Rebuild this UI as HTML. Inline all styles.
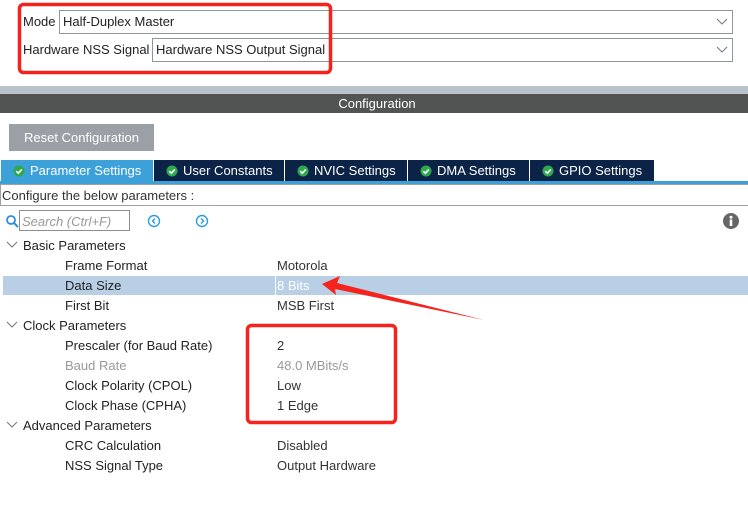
<!DOCTYPE html>
<html><head><meta charset="utf-8"><style>
*{margin:0;padding:0;box-sizing:border-box}
body{width:748px;height:513px;background:#fff;position:relative;overflow:hidden;font-family:"Liberation Sans",Arial,sans-serif;font-size:13px;color:#222}
.a{position:absolute;white-space:nowrap}
.sel{position:absolute;border:1px solid #8e969c;height:24px;background:#fff;padding:3px 0 0 3px}
.chev{position:absolute;right:4px;top:5px}
.tab{position:absolute;top:160px;height:21px;background:#0b2347;color:#fff;padding:3px 0 0 0;font-size:13px}
.tab svg{vertical-align:-2px;margin:0 5px 0 12px}
.row{position:absolute;left:0;width:748px;height:20px}
.lbl{position:absolute;left:65px;top:3px}
.val{position:absolute;left:277px;top:3px;color:#333}
.grp{position:absolute;left:23px;top:3px}
.gc{position:absolute;left:6px;top:6px}
</style></head><body>
<div class="a" style="left:23px;top:14px">Mode</div>
<div class="sel" style="left:59px;top:10px;width:674px">Half-Duplex Master<svg class="chev" width="12" height="10"><path d="M1 3l5 5 5-5" fill="none" stroke="#777" stroke-width="1"/></svg></div>
<div class="a" style="left:23px;top:42px">Hardware NSS Signal</div>
<div class="sel" style="left:152px;top:38px;width:581px">Hardware NSS Output Signal<svg class="chev" width="12" height="10"><path d="M1 3l5 5 5-5" fill="none" stroke="#777" stroke-width="1"/></svg></div>

<div class="a" style="left:0;top:86px;width:748px;height:8px;background:#bac3c9"></div>
<div class="a" style="left:0;top:94px;width:748px;height:19px;background:#525453;color:#fff;text-align:center;padding-top:2px;padding-left:6px">Configuration</div>

<div class="a" style="left:9px;top:124px;width:145px;height:27px;background:#9aa0a5;color:#fff;text-align:center;padding-top:6px">Reset Configuration</div>

<div class="tab" style="left:1px;width:152px;background:#3ca1d9"><svg width="12" height="12"><circle cx="6" cy="6" r="5.5" fill="#2fa84f"/><path d="M3.3 6.2l2 2 3.5-3.8" fill="none" stroke="#fff" stroke-width="1.6"/></svg>Parameter Settings</div>
<div class="tab" style="left:154px;width:130px"><svg width="12" height="12"><circle cx="6" cy="6" r="5.5" fill="#2fa84f"/><path d="M3.3 6.2l2 2 3.5-3.8" fill="none" stroke="#fff" stroke-width="1.6"/></svg>User Constants</div>
<div class="tab" style="left:285px;width:122px"><svg width="12" height="12"><circle cx="6" cy="6" r="5.5" fill="#2fa84f"/><path d="M3.3 6.2l2 2 3.5-3.8" fill="none" stroke="#fff" stroke-width="1.6"/></svg>NVIC Settings</div>
<div class="tab" style="left:408px;width:121px"><svg width="12" height="12"><circle cx="6" cy="6" r="5.5" fill="#2fa84f"/><path d="M3.3 6.2l2 2 3.5-3.8" fill="none" stroke="#fff" stroke-width="1.6"/></svg>DMA Settings</div>
<div class="tab" style="left:530px;width:124px"><svg width="12" height="12"><circle cx="6" cy="6" r="5.5" fill="#2fa84f"/><path d="M3.3 6.2l2 2 3.5-3.8" fill="none" stroke="#fff" stroke-width="1.6"/></svg>GPIO Settings</div>
<div class="a" style="left:0;top:181px;width:748px;height:3px;background:#3ca1d9"></div>
<div class="a" style="left:0;top:184px;width:748px;height:22px;border:1px solid #a0a0a0;border-right:none;padding:3px 0 0 1px;color:#333">Configure the below parameters :</div>

<svg class="a" style="left:5px;top:214px" width="14" height="14"><circle cx="6" cy="6" r="4" fill="none" stroke="#2b8fd6" stroke-width="1.8"/><path d="M9 9l4 4" stroke="#2b8fd6" stroke-width="2"/></svg>
<div class="a" style="left:19px;top:210px;width:111px;height:21px;border:1px solid #8e8e8e;color:#999;font-style:italic;padding:3px 0 0 2px">Search (Ctrl+F)</div>
<svg class="a" style="left:147px;top:214px" width="14" height="14"><circle cx="7" cy="7" r="5.5" fill="none" stroke="#2b9be0" stroke-width="1.4"/><path d="M8 4.5L5.5 7 8 9.5" fill="none" stroke="#2b9be0" stroke-width="1.4"/></svg>
<svg class="a" style="left:195px;top:214px" width="14" height="14"><circle cx="7" cy="7" r="5.5" fill="none" stroke="#2b9be0" stroke-width="1.4"/><path d="M6 4.5L8.5 7 6 9.5" fill="none" stroke="#2b9be0" stroke-width="1.4"/></svg>
<svg class="a" style="left:723px;top:213px" width="16" height="16"><circle cx="8" cy="8" r="8" fill="#666"/><rect x="6.7" y="6.5" width="2.6" height="6.5" fill="#fff"/><circle cx="8" cy="4.2" r="1.5" fill="#fff"/></svg>

<div class="row" style="top:235px"><svg class="gc" width="12" height="8"><path d="M1 1l5 5 5-5" fill="none" stroke="#777"/></svg><span class="grp">Basic Parameters</span></div>
<div class="row" style="top:255px"><span class="lbl">Frame Format</span><span class="val">Motorola</span></div>
<div class="row" style="top:276px;left:3px;height:19px;background:#b8cfe6"><span class="lbl" style="left:62px;top:2px">Data Size</span><span class="a" style="left:272px;top:0;width:1px;height:19px;background:#fff"></span><span class="val" style="left:274px;top:2px;color:#fff">8 Bits</span></div>
<div class="row" style="top:295px"><span class="lbl">First Bit</span><span class="val">MSB First</span></div>
<div class="row" style="top:315px"><svg class="gc" width="12" height="8"><path d="M1 1l5 5 5-5" fill="none" stroke="#777"/></svg><span class="grp">Clock Parameters</span></div>
<div class="row" style="top:335px"><span class="lbl">Prescaler (for Baud Rate)</span><span class="val">2</span></div>
<div class="row" style="top:355px"><span class="lbl" style="color:#999">Baud Rate</span><span class="val" style="color:#999">48.0 MBits/s</span></div>
<div class="row" style="top:375px"><span class="lbl">Clock Polarity (CPOL)</span><span class="val">Low</span></div>
<div class="row" style="top:395px"><span class="lbl">Clock Phase (CPHA)</span><span class="val">1 Edge</span></div>
<div class="row" style="top:415px"><svg class="gc" width="12" height="8"><path d="M1 1l5 5 5-5" fill="none" stroke="#777"/></svg><span class="grp">Advanced Parameters</span></div>
<div class="row" style="top:435px"><span class="lbl">CRC Calculation</span><span class="val">Disabled</span></div>
<div class="row" style="top:455px"><span class="lbl">NSS Signal Type</span><span class="val">Output Hardware</span></div>

<svg class="a" style="left:0;top:0" width="748" height="513">
<rect x="19.5" y="4.5" width="311" height="68" rx="4" fill="none" stroke="#f5231d" stroke-width="3.5"/>
<rect x="247.5" y="325.5" width="148" height="97" rx="4" fill="none" stroke="#f5231d" stroke-width="3.5"/>
<path d="M322 284 L340 276 L337 283 L484 320 L335 289 L336 295 Z" fill="#f5231d"/>
</svg>
</body></html>
